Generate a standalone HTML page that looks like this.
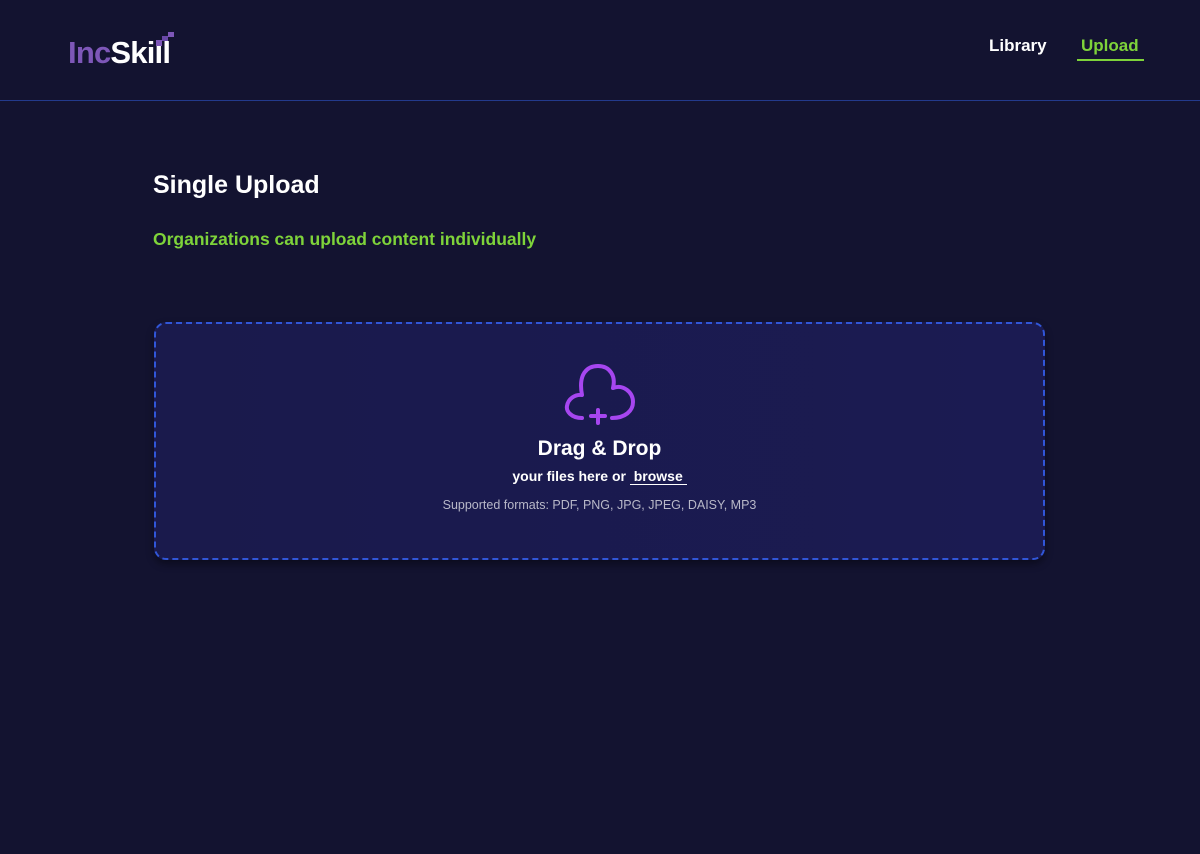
<!DOCTYPE html>
<html><head><meta charset="utf-8"><style>
*{margin:0;padding:0;box-sizing:border-box}
body{width:1200px;height:854px;background:#131330;font-family:"Liberation Sans",sans-serif;color:#fff;position:relative;overflow:hidden}
.hdr{position:absolute;left:0;top:0;width:1200px;height:101px;border-bottom:1.5px solid #233a8c}
.logo{position:absolute;left:68px;top:35px;font-size:31px;font-weight:bold;letter-spacing:-0.8px}
.logo .a{color:#7e57b8}
.nav{position:absolute;top:36px;font-size:17px;font-weight:bold}
h1{position:absolute;left:153px;top:171px;font-size:25px;font-weight:bold}
.sub{position:absolute;left:153px;top:229px;font-size:17.5px;font-weight:bold;color:#7ed33a}
.box{position:absolute;left:154px;top:322px;width:891px;height:238px;border:2px dashed #3156d8;border-radius:12px;background:linear-gradient(90deg,#1a1a4c,#1b1b52);box-shadow:0 4px 8px rgba(0,0,0,.4)}
.t{position:absolute;left:0;width:100%;text-align:center}
</style></head><body>
<div class="hdr">
<div class="logo"><span class="a">Inc</span>Skill</div>
<svg style="position:absolute;left:156px;top:32px" width="22" height="14"><rect x="0" y="8" width="6" height="6" fill="#7e57b8"/><rect x="6" y="4" width="6" height="5" fill="#6a48a8"/><rect x="12" y="0" width="6" height="5" fill="#7e57b8"/></svg>
<div class="nav" style="left:989px">Library</div>
<div class="nav" style="left:1081px;color:#7ed33a">Upload</div>
<div style="position:absolute;left:1077px;top:59px;width:67px;height:2px;background:#7ed33a"></div>
</div>
<h1>Single Upload</h1>
<div class="sub">Organizations can upload content individually</div>
<div class="box">
<svg style="position:absolute;left:407px;top:40px" width="74" height="64" viewBox="0 0 74 64" fill="none" stroke="#a646f0" stroke-width="4" stroke-linecap="round" stroke-linejoin="round">
<path d="M19 54 C8 54 3 47 4 42 C5 35 12 30 19 31 C15 10 24 2 35 2 C47 2 53 12 50 24 C60 20 70 28 70 38 C70 47 62 54 49 54"/>
<path d="M35 46 V59 M28 52 H42"/>
</svg>
<div class="t" style="top:113px;font-size:21px;font-weight:bold">Drag &amp; Drop</div>
<div class="t" style="top:144px;font-size:14px;font-weight:bold">your files here or <span style="border-bottom:1.5px solid #fff">&nbsp;browse&nbsp;</span></div>
<div class="t" style="top:174px;font-size:12.5px;color:#b8b8c8">Supported formats: PDF, PNG, JPG, JPEG, DAISY, MP3</div>
</div>
</body></html>
